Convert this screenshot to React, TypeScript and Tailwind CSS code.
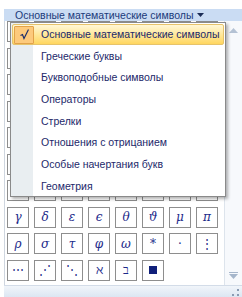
const menuItems = [
  "Основные математические символы",
  "Греческие буквы",
  "Буквоподобные символы",
  "Операторы",
  "Стрелки",
  "Отношения с отрицанием",
  "Особые начертания букв",
  "Геометрия",
];

const visibleRows: string[][] = [
  ["γ", "δ", "ε", "ϵ", "θ", "ϑ", "μ", "π"],
  ["ρ", "σ", "τ", "φ", "ω", "*", "·", "⋮"],
  ["⋯", "⋰", "⋱", "ℵ", "ב", "■"],
];

// these are drawn upright, the greek letters in italic
const upright = ["*", "·", "⋮", "⋯", "⋰", "⋱", "ℵ", "ב"];

const hiddenRows: string[][] = Array.from({ length: 7 }, () =>
  Array.from({ length: 8 }, () => "")
);

const SymbolCell = ({ sym }: { sym: string }) => {
  const isSquare = sym === "■";
  const isUpright = upright.includes(sym);
  return (
    <div className="w-[22px] h-[21px] border border-[#8e8e8e] bg-white flex items-center justify-center">
      {isSquare ? (
        <div className="w-[8px] h-[8px] bg-[#10207a]" />
      ) : (
        <span
          className={
            isUpright
              ? "text-[12px] leading-none text-[#1c2a8a] font-['DejaVu_Serif',serif]"
              : "text-[12px] leading-none italic text-[#1c2a8a] font-['DejaVu_Serif',serif]"
          }
        >
          {sym}
        </span>
      )}
    </div>
  );
};

const App = () => {
  const rows = [...hiddenRows, ...visibleRows];

  return (
    <div className="relative w-[242px] h-[297px] bg-white overflow-hidden font-['Liberation_Sans',Arial,sans-serif]">
      <div className="h-[9px]" />
      <div className="ml-[4px] h-[288px] flex flex-col">
        {/* gallery header */}
        <div className="h-[12px] bg-[#cadcf3] flex items-center pl-[11px] gap-[4px]">
          <span className="text-[10.5px] leading-none whitespace-nowrap text-[#1b3a7a]">
            Основные математические символы
          </span>
          <svg width="7" height="4" viewBox="0 0 7 4">
            <path d="M0 0h7L3.5 4z" fill="#1b2c55" />
          </svg>
        </div>

        {/* gallery body */}
        <div className="flex-1 flex border-l border-[#cfd6df] overflow-hidden">
          <div className="w-[219px] pl-[2px] overflow-hidden">
            <div className="grid grid-cols-[repeat(8,22px)] gap-x-[5px] gap-y-[5.5px]">
              {rows.flatMap((row, r) =>
                row.map((sym, c) => <SymbolCell key={`${r}-${c}`} sym={sym} />)
              )}
            </div>
          </div>
          {/* scroll column */}
          <div className="flex-1 border-l border-[#dde4ec] bg-[#f7f9fc] flex flex-col items-center justify-between pt-[7px] pb-[6px]">
            <svg width="9" height="5" viewBox="0 0 9 5">
              <path d="M0 5h9L4.5 0z" fill="#b4c2d4" />
            </svg>
            <svg width="9" height="7" viewBox="0 0 9 7">
              <rect x="0" y="0" width="9" height="1" fill="#a6b6cb" />
              <path d="M0 2h9L4.5 7z" fill="#a6b6cb" />
            </svg>
          </div>
        </div>

        {/* footer with grip */}
        <div className="h-[12px] bg-gradient-to-b from-[#f1f5fa] to-[#dce6f2] border-t border-[#d3dce8] flex justify-end items-end pr-[3px] pb-[1px]">
          <svg width="7" height="7" viewBox="0 0 7 7">
            <rect x="5" y="0" width="2" height="2" fill="#8a9bb3" />
            <rect x="0" y="5" width="2" height="2" fill="#8a9bb3" />
            <rect x="5" y="5" width="2" height="2" fill="#8a9bb3" />
          </svg>
        </div>
      </div>

      {/* dropdown menu over the gallery */}
      <div className="absolute left-[10px] top-[22px] w-[216px] h-[175px] bg-white border border-[#8a8a8a] shadow-[2px_2px_3px_rgba(0,0,0,0.3)]">
        <div className="absolute left-0 top-0 bottom-0 w-[22px] bg-[#e9eef1]" />
        <div className="relative flex flex-col pt-[1px]">
          {menuItems.map((item, i) => (
            <div
              key={item}
              className={
                i === 0
                  ? "h-[21px] mx-[1px] flex items-center border border-[#e6c36b] rounded-[2px] bg-gradient-to-b from-[#fff7d6] via-[#ffe89a] to-[#ffd65e]"
                  : "h-[21.7px] mx-[1px] flex items-center border border-transparent"
              }
            >
              <div className="w-[28px] shrink-0 flex items-center justify-start pl-[1px]">
                {i === 0 && (
                  <div className="w-[20px] h-[18px] border border-[#e2a24a] rounded-[1px] bg-[#fdca7c] flex items-center justify-center">
                    <svg width="9" height="11" viewBox="0 0 9 11">
                      <path d="M0.5 6.5L2.5 5.5L4 9.5L8.5 0.5" fill="none" stroke="#1e2f6b" strokeWidth="1.2" />
                    </svg>
                  </div>
                )}
              </div>
              <span className="text-[10.5px] leading-none whitespace-nowrap text-[#22286a]">
                {item}
              </span>
            </div>
          ))}
        </div>
      </div>
    </div>
  );
};

export default App;
